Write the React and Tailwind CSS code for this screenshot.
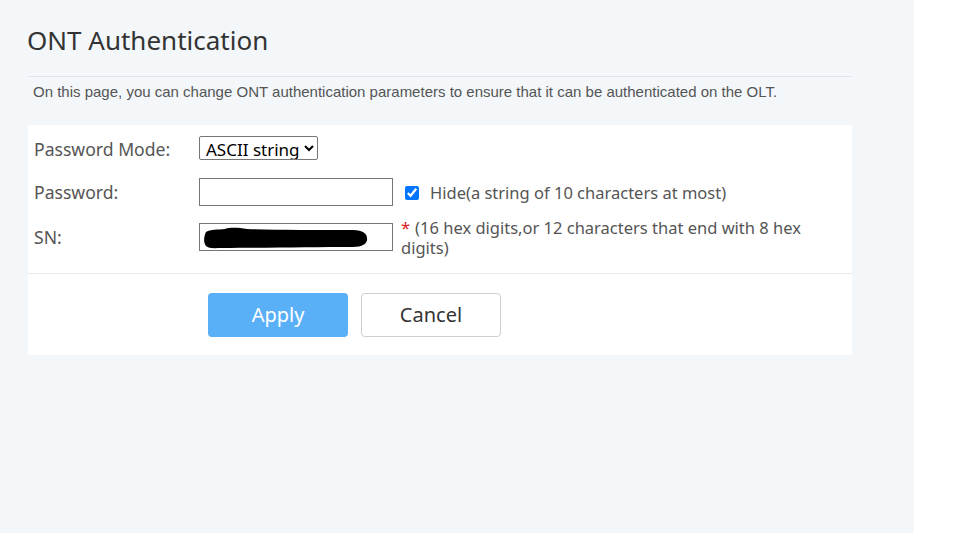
import { useState } from "react";

const formFont = { fontFamily: '"Noto Sans", "Open Sans", sans-serif' };

function Row({ label, children, className = "" }) {
  return (
    <div className={`flex items-start ${className}`}>
      <div className="w-[165px] shrink-0 text-[17.6px] text-[#555]">{label}</div>
      <div className="flex items-start">{children}</div>
    </div>
  );
}

export default function App() {
  const [mode, setMode] = useState("ascii");
  const [hide, setHide] = useState(true);
  const [password, setPassword] = useState("");

  return (
    <div className="flex min-h-[533px] w-[980px]">
      <div className="w-[914px] shrink-0 bg-[#f3f7fa] pl-[28px] pt-[24px]" style={formFont}>
        <h1 className="-ml-px text-[26px] leading-[32px] text-[#333]">ONT Authentication</h1>

        <div className="mt-[20px] w-[824px] border-t border-[#e1e5ea]" />
        <p
          className="mt-[6px] pl-[5px] text-[15px] leading-[18px] text-[#555]"
          style={{ fontFamily: '"Liberation Sans", Arial, sans-serif' }}
        >
          On this page, you can change ONT authentication parameters to ensure that it can be authenticated on the OLT.
        </p>

        {/* form panel */}
        <div className="mt-[24px] w-[824px] bg-white">
          <div className="pl-[6px] pt-[11px]">
            <Row label={<span className="leading-[24px]">Password Mode:</span>} className="h-[24px]">
              <select
                value={mode}
                onChange={(e) => setMode(e.target.value)}
                className="h-[24px] w-[119px] rounded-[2px] border border-[#767676] bg-white pl-[2px] text-[17px] leading-[20px] text-black"
              >
                <option value="ascii">ASCII string</option>
                <option value="hex">Hex string</option>
              </select>
            </Row>

            <Row label={<span className="leading-[28px]">Password:</span>} className="mt-[18px] h-[28px]">
              <input
                type={hide ? "password" : "text"}
                value={password}
                onChange={(e) => setPassword(e.target.value)}
                className="h-[28px] w-[194px] border border-[#767676] bg-white px-1 text-[15px]"
              />
              <label className="ml-[12px] mt-[7px] flex items-center text-[16.5px] leading-[16px] text-[#555]">
                <input
                  type="checkbox"
                  checked={hide}
                  onChange={(e) => setHide(e.target.checked)}
                  className="m-0 h-[14px] w-[14px]"
                />
                <span className="ml-[11px]">Hide(a string of 10 characters at most)</span>
              </label>
            </Row>

            <Row label={<span className="leading-[28px]">SN:</span>} className="mt-[17px]">
              <div className="relative h-[28px] w-[194px] border border-[#767676] bg-white">
                {/* redacted serial number */}
                <svg className="absolute left-[3px] top-[2px]" width="166" height="24" viewBox="0 0 166 24">
                  <path
                    d="M3 6 C 8 3, 14 4, 22 3 C 28 1, 36 2, 44 3 C 70 4, 110 4, 150 4 C 160 4, 164 8, 164 12 C 165 17, 160 21, 150 21 C 110 21, 60 22, 20 22 C 12 22, 6 23, 3 20 C 0 16, 1 10, 3 6 Z"
                    fill="#000"
                  />
                </svg>
              </div>
              <p className="ml-[8px] -mt-[5px] w-[420px] text-[16.5px] leading-[20px] text-[#555]">
                <span className="mr-[5px] text-[#e02020]">*</span>(16 hex digits,or 12 characters that end with 8 hex digits)
              </p>
            </Row>
          </div>

          <div className="mt-[15px] border-t border-[#e8ebee]" />

          <div className="flex gap-[13px] pb-[18px] pl-[180px] pt-[19px]">
            <button className="h-[44px] w-[140px] rounded-[4px] bg-[#5ab0f6] text-[20px] text-white">Apply</button>
            <button className="h-[44px] w-[140px] rounded-[4px] border border-[#cfcfcf] bg-white text-[20px] text-[#333]">
              Cancel
            </button>
          </div>
        </div>
      </div>
      <div className="flex-1 bg-white" />
    </div>
  );
}
